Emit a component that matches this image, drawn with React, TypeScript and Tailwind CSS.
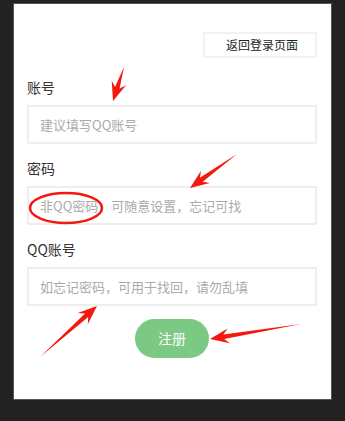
import React from 'react';

// red screenshot-annotation arrow, built from tail -> tip
const arrowPoints = (x1: number, y1: number, x2: number, y2: number) => {
    const dx = x2 - x1;
    const dy = y2 - y1;
    const len = Math.hypot(dx, dy);
    const ux = dx / len;
    const uy = dy / len;
    const nx = -uy;
    const ny = ux;
    const head = 19;
    const pts: [number, number][] = [
        [0, 0],
        [len - head + 5, -2.4],
        [len - head, -7.5],
        [len, 0],
        [len - head, 7.5],
        [len - head + 5, 2.4],
    ];
    return pts
        .map(([a, b]) => `${(x1 + ux * a + nx * b).toFixed(1)},${(y1 + uy * a + ny * b).toFixed(1)}`)
        .join(' ');
};

const ARROWS = [
    [124, 67, 113, 101],
    [237, 154, 190, 188],
    [40, 357, 97, 306],
    [301, 324, 210, 339],
];

const Annotations = () => (
    <svg className="absolute inset-0 pointer-events-none" width="345" height="421" viewBox="0 0 345 421">
        <ellipse cx="66" cy="208" rx="36" ry="15" fill="none" stroke="#f5180e" strokeWidth="2.5" />
        {ARROWS.map(([a, b, c, d], i) => (
            <polygon key={i} points={arrowPoints(a, b, c, d)} fill="#f5180e" />
        ))}
    </svg>
);

const Field = ({ label, placeholder, className = '' }: { label: string; placeholder: string; className?: string }) => (
    <div className={`flex flex-col ${className}`}>
        <span className="text-[14px] leading-[20px] text-[#333]">{label}</span>
        <input
            className="mt-[8px] h-[39px] w-full border-2 border-[#eeeeee] px-[11px] text-[13px] text-[#333] outline-none placeholder:text-[#aaaaaa]"
            placeholder={placeholder}
        />
    </div>
);

export default function App() {
    return (
        <div
            className="relative w-[345px] h-[421px] bg-[#222222] overflow-hidden"
            style={{ fontFamily: '"Microsoft YaHei", "Noto Sans CJK SC", "Noto Sans", sans-serif' }}
        >
            <div className="ml-[13px] mt-[3px] w-[319px] h-[397px] bg-white border border-[#555555] pl-[13px] pr-[14px] pt-[28px] flex flex-col">
                <div className="flex justify-end">
                    <button className="w-[114px] h-[26px] border-2 border-[#f2f2f2] bg-white pl-[4px] text-[12px] text-[#222]">
                        返回登录页面
                    </button>
                </div>

                <Field label="账号" placeholder="建议填写QQ账号" className="mt-[19px]" />
                <Field label="密码" placeholder="非QQ密码，可随意设置，忘记可找" className="mt-[14px]" />
                <Field label="QQ账号" placeholder="如忘记密码，可用于找回，请勿乱填" className="mt-[14px]" />

                <div className="mt-[13px] flex justify-center">
                    <button className="w-[74px] h-[39px] rounded-full bg-[#7bc983] text-white text-[14px]">注册</button>
                </div>
            </div>
            <Annotations />
        </div>
    );
}
